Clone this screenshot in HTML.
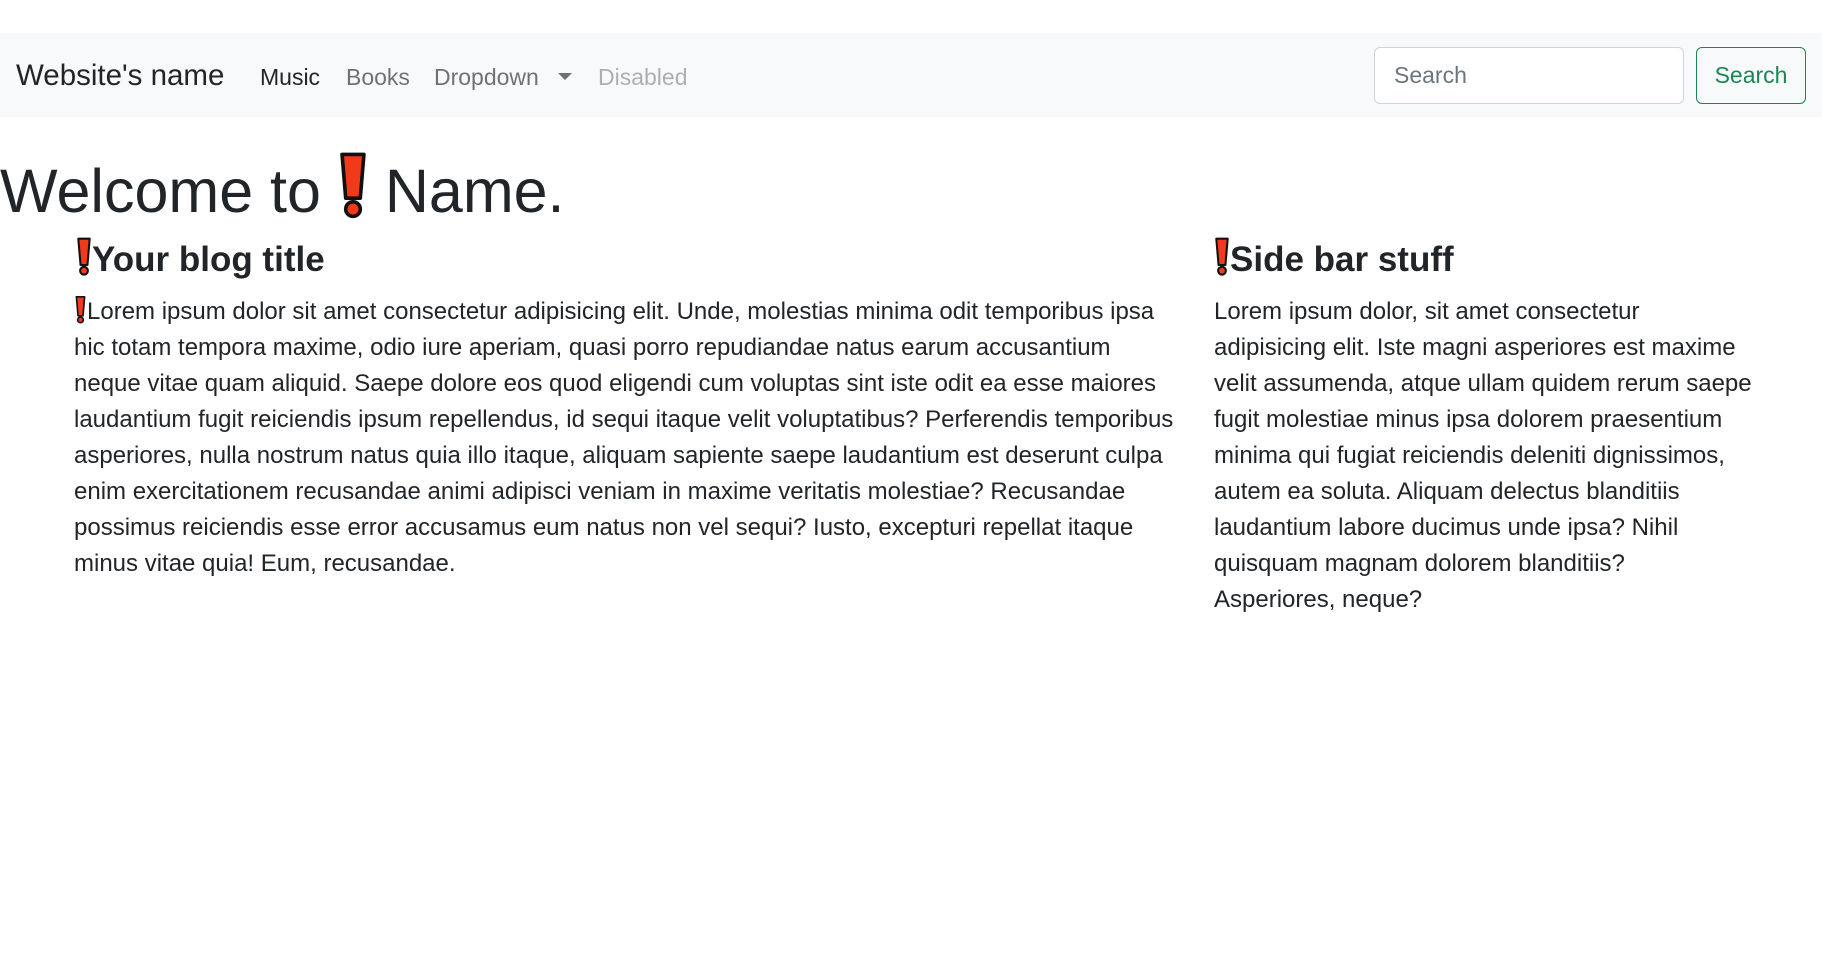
<!DOCTYPE html>
<html><head><meta charset="utf-8"><style>
*{margin:0;padding:0;box-sizing:border-box}
body{width:1822px;height:970px;background:#fff;font-family:"Liberation Sans",sans-serif;color:#212529;position:relative;overflow:hidden}
.nav{position:absolute;left:0;top:33px;width:1822px;height:84px;background:#f8f9fa}
.t{position:absolute;white-space:nowrap}
.nl{font-size:23px;top:31px;color:rgba(0,0,0,.55)}
.inp{position:absolute;left:1374px;top:14px;width:310px;height:57px;border:1px solid #ced4da;border-radius:6px;background:#fff}
.btn{position:absolute;left:1696px;top:14px;width:110px;height:57px;border:1px solid #198754;border-radius:6px;color:#198754;font-size:23px;line-height:55px;text-align:center}
.p{font-size:24px;line-height:36px}
svg{display:inline-block}
</style></head><body>
<div class="nav">
<div class="t" style="left:16px;top:26px;font-size:29.5px;color:#212529">Website's name</div>
<div class="t nl" style="left:260px;color:#212529">Music</div>
<div class="t nl" style="left:346px">Books</div>
<div class="t nl" style="left:434px">Dropdown</div>
<div style="position:absolute;left:558px;top:40px;width:0;height:0;border-left:7px solid transparent;border-right:7px solid transparent;border-top:7px solid rgba(0,0,0,.55)"></div>
<div class="t nl" style="left:598px;color:rgba(0,0,0,.3)">Disabled</div>
<div class="inp"><span class="t" style="left:19px;top:14px;font-size:23px;color:#6c757d">Search</span></div>
<div class="btn">Search</div>
</div>

<div class="t" style="left:0;top:152px;font-size:61px;line-height:72px">Welcome to <svg width="30" height="68" viewBox="0 0 12 28" style="vertical-align:-8px"><path d="M1.5 1H10.5L9 19H3Z" fill="#f13a1a" stroke="#111" stroke-width="1.5" stroke-linejoin="round"/><circle cx="6" cy="23.5" r="3" fill="#f13a1a" stroke="#111" stroke-width="1.5"/></svg> Name.</div>

<div class="t" style="left:76px;top:236px;font-size:35px;font-weight:bold;line-height:48px"><svg width="16" height="40" viewBox="0 0 14 34" style="vertical-align:-6px"><path d="M2 1H12L10 24H4Z" fill="#f13a1a" stroke="#111" stroke-width="1.8" stroke-linejoin="round"/><circle cx="7" cy="29" r="3.4" fill="#f13a1a" stroke="#111" stroke-width="1.8"/></svg>Your blog title</div>

<div class="t p" style="left:74px;top:294px"><svg width="13" height="28" viewBox="0 0 14 34" style="vertical-align:-5px"><path d="M2 1H12L10 24H4Z" fill="#f13a1a" stroke="#111" stroke-width="2" stroke-linejoin="round"/><circle cx="7" cy="29" r="3.4" fill="#f13a1a" stroke="#111" stroke-width="2"/></svg>Lorem ipsum dolor sit amet consectetur adipisicing elit. Unde, molestias minima odit temporibus ipsa<br>hic totam tempora maxime, odio iure aperiam, quasi porro repudiandae natus earum accusantium<br>neque vitae quam aliquid. Saepe dolore eos quod eligendi cum voluptas sint iste odit ea esse maiores<br>laudantium fugit reiciendis ipsum repellendus, id sequi itaque velit voluptatibus? Perferendis temporibus<br>asperiores, nulla nostrum natus quia illo itaque, aliquam sapiente saepe laudantium est deserunt culpa<br>enim exercitationem recusandae animi adipisci veniam in maxime veritatis molestiae? Recusandae<br>possimus reiciendis esse error accusamus eum natus non vel sequi? Iusto, excepturi repellat itaque<br>minus vitae quia! Eum, recusandae.</div>

<div class="t" style="left:1214px;top:236px;font-size:35px;font-weight:bold;line-height:48px"><svg width="16" height="40" viewBox="0 0 14 34" style="vertical-align:-6px"><path d="M2 1H12L10 24H4Z" fill="#f13a1a" stroke="#111" stroke-width="1.8" stroke-linejoin="round"/><circle cx="7" cy="29" r="3.4" fill="#f13a1a" stroke="#111" stroke-width="1.8"/></svg>Side bar stuff</div>

<div class="t p" style="left:1214px;top:294px">Lorem ipsum dolor, sit amet consectetur<br>adipisicing elit. Iste magni asperiores est maxime<br>velit assumenda, atque ullam quidem rerum saepe<br>fugit molestiae minus ipsa dolorem praesentium<br>minima qui fugiat reiciendis deleniti dignissimos,<br>autem ea soluta. Aliquam delectus blanditiis<br>laudantium labore ducimus unde ipsa? Nihil<br>quisquam magnam dolorem blanditiis?<br>Asperiores, neque?</div>
</body></html>
